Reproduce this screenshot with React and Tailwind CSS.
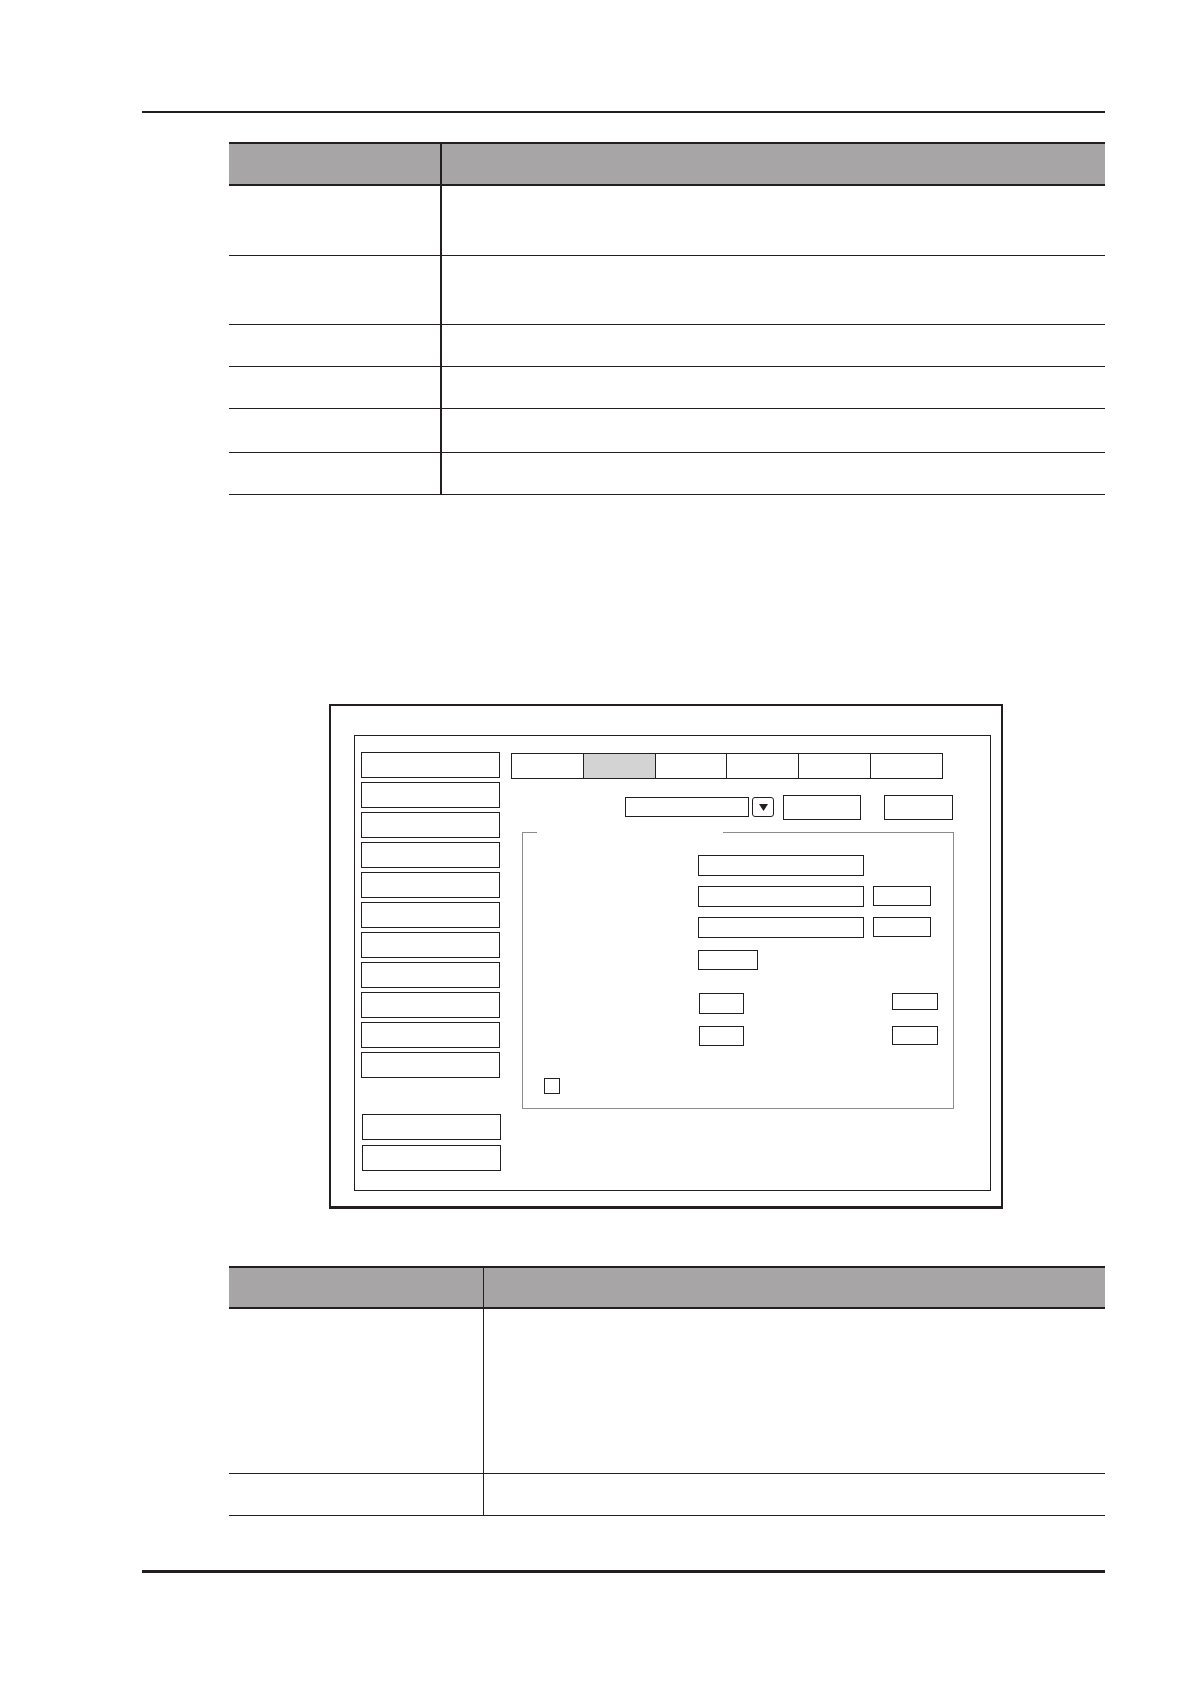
import React from 'react';

const line = 'border-[#231f20]';

const table1Rows = [70, 69, 42, 42, 44, 42];
const table2Rows = [165, 42];

const DataTable = ({ firstCol, thickDivider, headerH, rows }) => {
    const divider = thickDivider ? 'border-r-2' : 'border-r';
    return (
        <div className={`ml-[229px] w-[876px] border-t-2 ${line}`}>
            {/* header */}
            <div className={`flex bg-[#a7a5a6] border-b-2 ${line}`} style={{ height: headerH }}>
                <div className={`${divider} ${line}`} style={{ width: firstCol }} />
                <div className="flex-1" />
            </div>
            {rows.map((h, i) => (
                <div key={i} className={`flex border-b-[1.5px] ${line}`} style={{ height: h }}>
                    <div className={`${divider} ${line}`} style={{ width: firstCol }} />
                    <div className="flex-1" />
                </div>
            ))}
        </div>
    );
};

const Box = ({ className = '' }) => (
    <div className={`border-[1.5px] ${line} bg-white ${className}`} />
);

const SettingsScreen = () => {
    const menu = Array.from({ length: 11 });
    const tabs = Array.from({ length: 6 });

    return (
        <div className={`ml-[329px] w-[674px] h-[505px] border-2 border-b-[3px] ${line}`}>
            <div className={`mt-[29px] ml-[23px] w-[637px] h-[456px] border ${line} flex`}>
                {/* left menu */}
                <div className="ml-[6px] mt-[16px] w-[140px] flex flex-col">
                    <div className="flex flex-col gap-[4px]">
                        {menu.map((_, i) => (
                            <Box
                                key={i}
                                className={`w-[139px] h-[26px] ${i === 7 ? 'bg-[#d3d3d3]' : ''}`}
                            />
                        ))}
                    </div>
                    <div className="mt-[36px] ml-px flex flex-col gap-[5px]">
                        <Box className="w-[139px] h-[26px]" />
                        <Box className="w-[139px] h-[26px]" />
                    </div>
                </div>

                {/* right pane */}
                <div className="ml-[10px] mt-[17px] flex flex-col">
                    <div className={`flex w-[432px] h-[26px] border-[1.5px] ${line}`}>
                        {tabs.map((_, i) => (
                            <div
                                key={i}
                                className={`flex-1 ${i > 0 ? `border-l ${line}` : ''} ${i === 1 ? 'bg-[#d3d3d3]' : ''}`}
                            />
                        ))}
                    </div>

                    <div className="mt-[16px] h-[25px] flex items-center">
                        <div className={`ml-[114px] w-[124px] h-[20px] border ${line}`} />
                        <div className={`ml-[3px] w-[22px] h-[20px] border ${line} rounded-[3px] flex items-center justify-center`}>
                            <svg width="9" height="7" viewBox="0 0 9 7">
                                <path d="M0 0 H9 L4.5 7 Z" fill="#231f20" />
                            </svg>
                        </div>
                        <Box className="ml-[9px] w-[78px] h-[25px]" />
                        <Box className="ml-[23px] w-[69px] h-[25px]" />
                    </div>

                    <div className="relative mt-[12px] ml-[11px] w-[432px] h-[277px] border border-[#8c8c8c] flex flex-col">
                        <span className="absolute -top-[2px] left-[14px] w-[186px] h-[3px] bg-white" />
                        <Box className="ml-[175px] mt-[22px] w-[166px] h-[21px]" />
                        <div className="ml-[175px] mt-[10px] flex">
                            <Box className="w-[166px] h-[21px]" />
                            <Box className="ml-[9px] w-[58px] h-[20px]" />
                        </div>
                        <div className="ml-[175px] mt-[10px] flex">
                            <Box className="w-[166px] h-[21px]" />
                            <Box className="ml-[9px] w-[58px] h-[20px]" />
                        </div>
                        <Box className="ml-[175px] mt-[12px] w-[60px] h-[20px]" />
                        <div className="ml-[176px] mt-[23px] flex items-start">
                            <Box className="w-[45px] h-[21px]" />
                            <Box className="ml-[148px] w-[46px] h-[17px]" />
                        </div>
                        <div className="ml-[176px] mt-[12px] flex items-start">
                            <Box className="w-[45px] h-[20px]" />
                            <Box className="ml-[148px] w-[46px] h-[19px]" />
                        </div>
                        <Box className="ml-[21px] mt-[32px] w-[16px] h-[16px]" />
                    </div>
                </div>
            </div>
        </div>
    );
};

export default function App() {
    return (
        <div className="w-[1191px] h-[1684px] bg-white pt-[111px] font-['Liberation_Sans',sans-serif]">
            <div className="ml-[142px] w-[963px] h-[1.5px] bg-[#231f20]" />

            <div className="mt-[29px]">
                <DataTable firstCol={213} thickDivider headerH={42} rows={table1Rows} />
            </div>

            <div className="mt-[209px]">
                <SettingsScreen />
            </div>

            <div className="mt-[57px]">
                <DataTable firstCol={255} headerH={41} rows={table2Rows} />
            </div>

            <div className="mt-[54px] ml-[142px] w-[963px] h-[3px] bg-[#231f20]" />
        </div>
    );
}
